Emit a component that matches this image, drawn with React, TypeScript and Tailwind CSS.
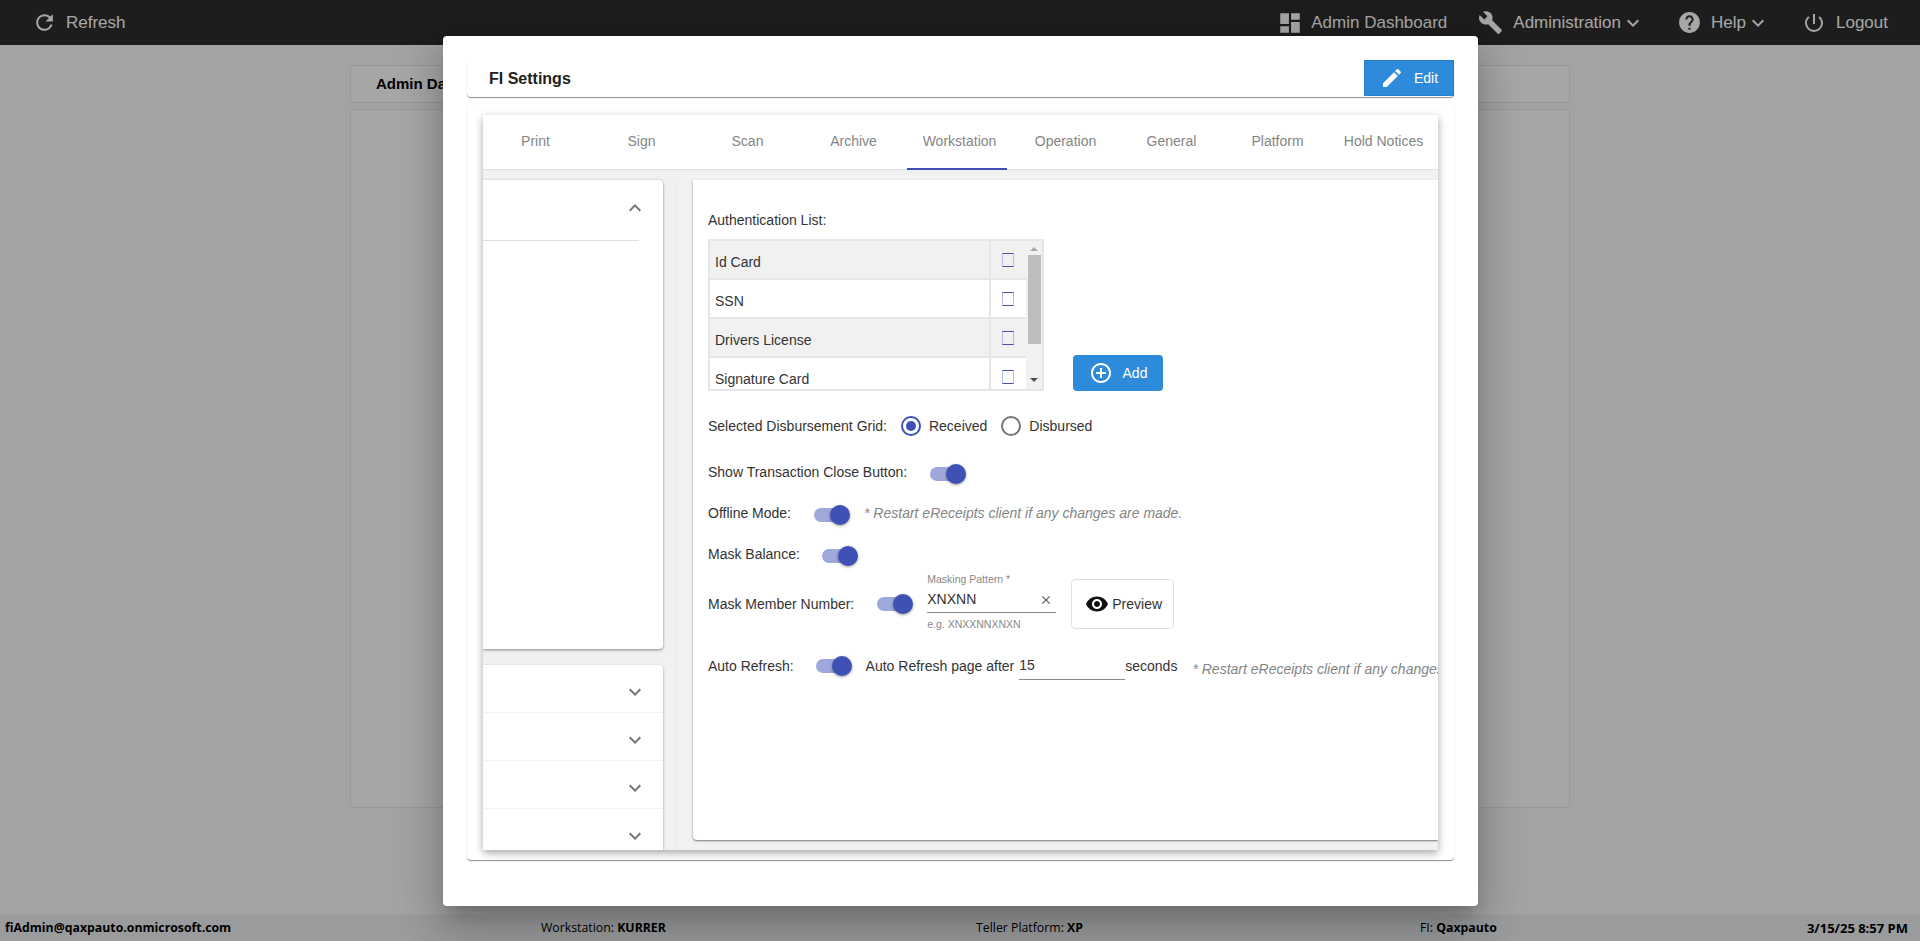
import { MdAddCircleOutline, MdBuild, MdClose, MdDashboard, MdEdit, MdExpandLess, MdExpandMore, MdHelp, MdKeyboardArrowDown, MdPowerSettingsNew, MdRefresh, MdRemoveRedEye } from 'react-icons/md';

const tabs = ['Print', 'Sign', 'Scan', 'Archive', 'Workstation', 'Operation', 'General', 'Platform', 'Hold Notices'];
const authList = ['Id Card', 'SSN', 'Drivers License', 'Signature Card'];

function Toggle({ className }: { className: string }) {
  return (
    <span className={`relative block w-[36px] h-[20px] shrink-0 ${className}`}>
      <span className="absolute left-0 top-[3px] w-[34px] h-[14px] rounded-full bg-[#9fa8da]" />
      <span className="absolute right-0 top-0 w-[20px] h-[20px] rounded-full bg-[#3f51b5] shadow-[0_1px_3px_rgba(0,0,0,0.4)]" />
    </span>
  );
}

export default function App() {
  return (
    <div className="relative h-[941px] overflow-hidden bg-[#fbfbfb] flex flex-col font-['Liberation_Sans',Arial,sans-serif]">
      <header className="h-[45px] shrink-0 bg-[#2d2d2d] text-white flex items-center text-[17px] pl-[32px] pr-[32px]">
        <MdRefresh className="w-[25px] h-[25px] mr-[9px]" />
        <span>Refresh</span>
        <div className="ml-auto flex items-center">
          <MdDashboard className="w-[26px] h-[26px] mr-[8px]" />
          <span>Admin Dashboard</span>
          <MdBuild className="w-[25px] h-[25px] ml-[31px] mr-[10px]" />
          <span>Administration</span>
          <MdKeyboardArrowDown className="w-[24px] h-[24px]" />
          <MdHelp className="w-[25px] h-[25px] ml-[32px] mr-[9px]" />
          <span>Help</span>
          <MdKeyboardArrowDown className="w-[24px] h-[24px]" />
          <MdPowerSettingsNew className="w-[24px] h-[24px] ml-[32px] mr-[10px]" />
          <span>Logout</span>
        </div>
      </header>

      <main className="flex-1 w-[1220px] ml-[350px] pt-[20px]">
        <div className="h-[38px] rounded bg-white border border-[#eaeaea] flex items-center pl-[25px] font-bold text-[15px] text-black">Admin Dashboard</div>
        <div className="h-[699px] mt-[6px] rounded bg-white border border-[#eaeaea]" />
      </main>

      <footer className="h-[26px] shrink-0 bg-[#eceef0] relative text-[12.3px] text-black flex items-center pt-[1px] font-['Open_Sans',sans-serif]">
        <span className="absolute left-[5px] font-bold">fiAdmin@qaxpauto.onmicrosoft.com</span>
        <span className="absolute left-[541px]">Workstation: <b>KURRER</b></span>
        <span className="absolute left-[976px]">Teller Platform: <b>XP</b></span>
        <span className="absolute left-[1420px]">FI: <b>Qaxpauto</b></span>
        <span className="absolute right-[12px] font-bold text-[13px]">3/15/25 8:57 PM</span>
      </footer>

      {/* modal */}
      <div className="absolute inset-0 bg-black/35">
        <div className="absolute left-[443px] top-[36px] w-[1035px] h-[870px] bg-white rounded shadow-[0_11px_15px_-7px_rgba(0,0,0,0.2),0_24px_38px_3px_rgba(0,0,0,0.14),0_9px_46px_8px_rgba(0,0,0,0.12)] px-[24px] pt-[24px] text-[14px] text-[#212121]">
          <div className="h-[37px] rounded shadow-[0_1px_1px_rgba(0,0,0,0.45)] flex items-start justify-between pl-[22px]">
            <span className="font-bold text-[16px] leading-[37px] text-[#212121]">FI Settings</span>
            <button className="w-[90px] h-[36px] bg-[#2e8bdb] border border-[#2a80ca] text-white flex items-center justify-center gap-[10px]">
              <MdEdit className="w-[24px] h-[24px]" />
              <span className="text-[14px]">Edit</span>
            </button>
          </div>

          <div className="h-[755px] mt-[8px] rounded shadow-[0_1px_1px_rgba(0,0,0,0.45)] px-[16px] pt-[10px]">
            <div className="h-[735px] flex flex-col bg-[#f1f1f1] shadow-[0_3px_8px_rgba(0,0,0,0.35)] overflow-hidden">
              <div className="h-[55px] shrink-0 bg-white border-b border-[#e0e0e0] flex gap-[6px] text-[#858585]">
                {tabs.map(t => (
                  <div key={t} className="relative w-[100px] pl-[5px] pb-[1px] flex items-center justify-center whitespace-nowrap">
                    {t}
                    {t === 'Workstation' && <span className="absolute left-0 right-0 bottom-[-1px] h-[2px] bg-[#3f51b5]" />}
                  </div>
                ))}
              </div>

              <div className="flex-1 min-h-0 flex pt-[10px]">
                {/* left accordions, cut off on the left in the picture */}
                <div className="w-[180px] shrink-0 flex flex-col">
                  <div className="h-[469px] shrink-0 bg-white rounded-r shadow-[0_1px_3px_rgba(0,0,0,0.45)] pr-[24px]">
                    <div className="h-[61px] border-b border-[#e0e0e0] flex justify-end pt-[16px] text-[#757575]">
                      <MdExpandLess className="w-[24px] h-[24px] mr-[-8px]" />
                    </div>
                  </div>
                  <div className="mt-[16px] flex-1 bg-white rounded-tr shadow-[0_1px_3px_rgba(0,0,0,0.35)] overflow-hidden">
                    {[0, 1, 2, 3].map(i => (
                      <div key={i} className="h-[48px] border-b border-[#f3f3f3] flex items-center justify-end pr-[16px] pt-[6px] text-[#757575]">
                        <MdExpandMore className="w-[24px] h-[24px]" />
                      </div>
                    ))}
                  </div>
                </div>

                <div className="w-[14px] shrink-0 border-r border-[#ececec]" />

                {/* workstation settings */}
                <div className="ml-[16px] flex-1 min-w-0 h-[660px] bg-white rounded-bl shadow-[0_1px_2px_rgba(0,0,0,0.5)] overflow-hidden pl-[15px] pt-[30px] text-[#333] whitespace-nowrap">
                  <div className="leading-[20px]">Authentication List:</div>
                  <div className="flex items-end mt-[9px]">
                    <div className="w-[336px] h-[152px] bg-[#f1f1f1] border-2 border-[#e4e6ea] flex overflow-hidden">
                      <div className="w-[316px]">
                        {authList.map((a, i) => (
                          <div key={a} className={`h-[39px] flex border-b-2 border-[#e4e6ea] ${i % 2 === 0 ? 'bg-[#f1f1f1]' : 'bg-white'}`}>
                            <div className="flex-1 flex items-center pl-[5px] pt-[5px] border-r-2 border-[#e4e6ea]">{a}</div>
                            <div className="w-[35px] pr-[1px] flex items-center justify-center">
                              <span className="w-[12px] h-[14px] border border-[#3f51b5] border-x-[#b9bde6]" />
                            </div>
                          </div>
                        ))}
                      </div>
                      <div className="flex-1 flex flex-col items-center">
                        <span className="mt-[6px] border-x-[4px] border-x-transparent border-b-[4px] border-b-[#a8a8a8]" />
                        <span className="mt-[4px] w-[13px] h-[89px] bg-[#bdbdbd]" />
                        <span className="mt-auto mb-[7px] border-x-[4px] border-x-transparent border-t-[4px] border-t-[#505050]" />
                      </div>
                    </div>
                    <button className="ml-[29px] w-[90px] h-[36px] rounded-sm bg-[#2e8bdb] text-white flex items-center justify-center gap-[10px]">
                      <MdAddCircleOutline className="w-[24px] h-[24px]" />
                      <span>Add</span>
                    </button>
                  </div>

                  <div className="flex items-center mt-[24px] h-[22px]">
                    <span>Selected Disbursement Grid:</span>
                    <span className="ml-[14px] w-[20px] h-[20px] rounded-full border-2 border-[#3f51b5] flex items-center justify-center">
                      <span className="w-[10px] h-[10px] rounded-full bg-[#3f51b5]" />
                    </span>
                    <span className="ml-[8px]">Received</span>
                    <span className="ml-[14px] w-[20px] h-[20px] rounded-full border-2 border-[#757575]" />
                    <span className="ml-[8px]">Disbursed</span>
                  </div>

                  <div className="flex items-center mt-[25px] h-[20px]">
                    <span>Show Transaction Close Button:</span>
                    <Toggle className="ml-[23px] mt-[3px]" />
                  </div>

                  <div className="flex items-center mt-[21px] h-[20px]">
                    <span>Offline Mode:</span>
                    <Toggle className="ml-[23px] mt-[3px]" />
                    <span className="ml-[14px] italic text-[#858585]">* Restart eReceipts client if any changes are made.</span>
                  </div>

                  <div className="flex items-center mt-[21px] h-[20px]">
                    <span>Mask Balance:</span>
                    <Toggle className="ml-[22px] mt-[3px]" />
                  </div>

                  <div className="flex items-center mt-[5px] h-[70px]">
                    <span>Mask Member Number:</span>
                    <Toggle className="ml-[23px]" />
                    <div className="ml-[14px] w-[129px] h-[62px] flex flex-col">
                      <span className="text-[10.5px] leading-[12px] text-[#888]">Masking Pattern *</span>
                      <div className="h-[24px] mt-[4px] pb-[2px] flex items-center justify-between border-b border-[#8a8a8a] pr-[3px]">
                        <span>XNXNN</span>
                        <MdClose className="w-[14px] h-[14px] text-[#555]" />
                      </div>
                      <span className="text-[10.5px] leading-[12px] mt-[5px] text-[#888]">e.g. XNXXNNXNXN</span>
                    </div>
                    <button className="ml-[15px] w-[103px] h-[50px] rounded border border-[#e0e0e0] flex items-center pl-[13px] gap-[3px]">
                      <MdRemoveRedEye className="w-[24px] h-[24px] text-[#111]" />
                      <span>Preview</span>
                    </button>
                  </div>

                  <div className="flex items-center mt-[12px] h-[30px]">
                    <span>Auto Refresh:</span>
                    <Toggle className="ml-[22px]" />
                    <span className="ml-[14px]">Auto Refresh page after</span>
                    <div className="ml-[5px] w-[106px] h-[28px] shrink-0 border-b border-[#8a8a8a] flex items-center">15</div>
                    <span>seconds</span>
                    <span className="ml-[15px] mt-[6px] italic text-[#858585]">* Restart eReceipts client if any changes are made.</span>
                  </div>
                </div>
              </div>
            </div>
          </div>
        </div>
      </div>
    </div>
  );
}
